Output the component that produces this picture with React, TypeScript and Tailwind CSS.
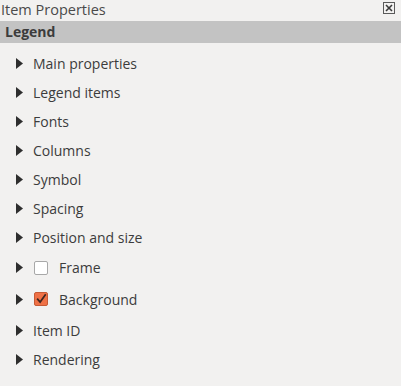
const items: { label: string; check?: 'off' | 'on'; h: string }[] = [
  { label: 'Main properties', h: 'h-[29px]' },
  { label: 'Legend items', h: 'h-[29px]' },
  { label: 'Fonts', h: 'h-[29px]' },
  { label: 'Columns', h: 'h-[29px]' },
  { label: 'Symbol', h: 'h-[29px]' },
  { label: 'Spacing', h: 'h-[29px]' },
  { label: 'Position and size', h: 'h-[29px]' },
  { label: 'Frame', check: 'off', h: 'h-[31px]' },
  { label: 'Background', check: 'on', h: 'h-[32px]' },
  { label: 'Item ID', h: 'h-[30px]' },
  { label: 'Rendering', h: 'h-[29px]' },
];

const Arrow = () => (
  <svg width="7" height="11" viewBox="0 0 7 11" className="shrink-0">
    <path d="M0 0 L7 5.5 L0 11 Z" fill="#2e2e2e" />
  </svg>
);

const CheckBox = ({ on }: { on: boolean }) =>
  on ? (
    <div className="w-[14px] h-[14px] rounded-[2px] bg-[#ef7146] border border-[#c65a35] flex items-center justify-center">
      <svg width="14" height="14" viewBox="0 0 14 14">
        <path d="M2.5 6.5 L6 10.5 L12.5 1.5" fill="none" stroke="#3d2620" strokeWidth="2" />
      </svg>
    </div>
  ) : (
    <div className="w-[14px] h-[14px] rounded-[2px] bg-white border border-[#a8a8a8]" />
  );

export default function App() {
  return (
    <div
      className="w-[401px] h-[386px] bg-[#f2f1f0] text-[#3c3c3c] overflow-hidden"
      style={{ fontFamily: '"Open Sans", "Noto Sans", sans-serif' }}
    >
      <div className="h-[21px] flex items-center justify-between pl-[1px] pr-[6px]">
        <span className="text-[14.5px] leading-none text-[#4a4a4a]">Item Properties</span>
        <svg width="12" height="12" viewBox="0 0 12 12" className="mb-[5px]">
          <rect x="0.5" y="0.5" width="11" height="11" fill="none" stroke="#5a5a5a" />
          <path d="M3 3 L9 9 M9 3 L3 9" stroke="#3a3a3a" strokeWidth="1.6" />
        </svg>
      </div>
      <div className="h-[22px] bg-[#c3c3c3] flex items-center pl-[5px]">
        <span className="text-[14px] font-bold leading-none text-[#3c3c3c]">Legend</span>
      </div>
      <div className="pt-[6px] flex flex-col">
        {items.map((it) => (
          <div key={it.label} className={`flex items-center pl-[16px] ${it.h}`}>
            <Arrow />
            {it.check ? (
              <>
                <div className="ml-[11px]">
                  <CheckBox on={it.check === 'on'} />
                </div>
                <span className="ml-[11px] text-[14px]">{it.label}</span>
              </>
            ) : (
              <span className="ml-[10px] text-[14px]">{it.label}</span>
            )}
          </div>
        ))}
      </div>
    </div>
  );
}
